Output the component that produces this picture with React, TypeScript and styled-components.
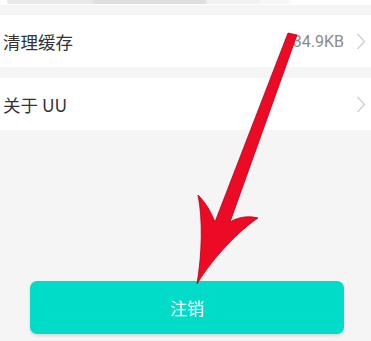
import React from 'react'
import styled, { createGlobalStyle } from 'styled-components'

const GlobalStyle = createGlobalStyle`
  html, body {
    margin: 0;
    padding: 0;
    background: #f5f5f5;
    font-family: "Noto Sans CJK SC", "Noto Sans", sans-serif;
  }
`

type Item = { label: string; value?: string }

const items: Item[] = [
  { label: '清理缓存', value: '34.9KB' },
  { label: '关于 UU' },
]

function Chevron() {
  return (
    <svg width="10" height="17" viewBox="0 0 10 17">
      <path d="M1.5 1 L8.5 8.5 L1.5 16" fill="none" stroke="#d0d0d0" strokeWidth="1.4" />
    </svg>
  )
}

function Arrow() {
  return (
    <SArrow width="371" height="341" viewBox="0 0 371 341">
      <path
        d="M288 33 L297 35 L230 222 C240 216 250 216 258 218 C240 230 214 256 197 284 C202 254 203 220 198 195 C206 203 211 212 215 222 Z"
        fill="#ec0a24"
        stroke="#b8001a"
        strokeWidth="0.8"
        strokeLinejoin="round"
      />
    </SArrow>
  )
}

export default function App() {
  return (
    <SPage>
      <GlobalStyle />
      <STopStrip>
        <STopBar />
      </STopStrip>
      <SList>
        {items.map((item) => (
          <SRow key={item.label}>
            <SLabel>{item.label}</SLabel>
            <SRight>
              {item.value && <SValue>{item.value}</SValue>}
              <Chevron />
            </SRight>
          </SRow>
        ))}
      </SList>
      <SFooter>
        <SButton>注销</SButton>
      </SFooter>
      <Arrow />
    </SPage>
  )
}

const SPage = styled.div`
  position: relative;
  width: 371px;
  height: 341px;
  overflow: hidden;
  background: #f5f5f5;
  display: flex;
  flex-direction: column;
`

const STopStrip = styled.div`
  background: #ffffff;
  height: 5px;
  padding: 0 81px 0 7px;
  display: flex;
  align-items: flex-start;
`

const STopBar = styled.div`
  flex: 1;
  height: 4px;
  border-radius: 0 0 2px 2px;
  background: linear-gradient(
    to right,
    #e9e9e9 0%,
    #e9e9e9 30%,
    #dedede 31%,
    #dedede 70%,
    #f0f0f0 71%,
    #f0f0f0 89%,
    #f7f7f7 90%
  );
`

const SList = styled.div`
  margin-top: 10px;
  display: flex;
  flex-direction: column;
  gap: 11px;
`

const SRow = styled.div`
  height: 52px;
  background: #ffffff;
  display: flex;
  align-items: center;
  justify-content: space-between;
  padding: 0 5px 0 3px;
`

const SLabel = styled.span`
  font-size: 17.5px;
  color: #333333;
`

const SRight = styled.div`
  display: flex;
  align-items: center;
  gap: 12px;
`

const SValue = styled.span`
  font-family: "Roboto", "Noto Sans", sans-serif;
  font-size: 16px;
  color: #8a8a8a;
`

const SFooter = styled.div`
  flex: 1;
  display: flex;
  align-items: flex-end;
  padding: 0 27px 7px 30px;
`

const SButton = styled.button`
  width: 100%;
  height: 53px;
  border: none;
  border-radius: 7px;
  background: #00dcc8;
  box-shadow: 0 2px 3px rgba(0, 0, 0, 0.12);
  color: #ffffff;
  font-family: "Noto Sans CJK SC", "Noto Sans", sans-serif;
  font-size: 17px;
  padding: 0;
`

const SArrow = styled.svg`
  position: absolute;
  left: 0;
  top: 0;
  pointer-events: none;
`
